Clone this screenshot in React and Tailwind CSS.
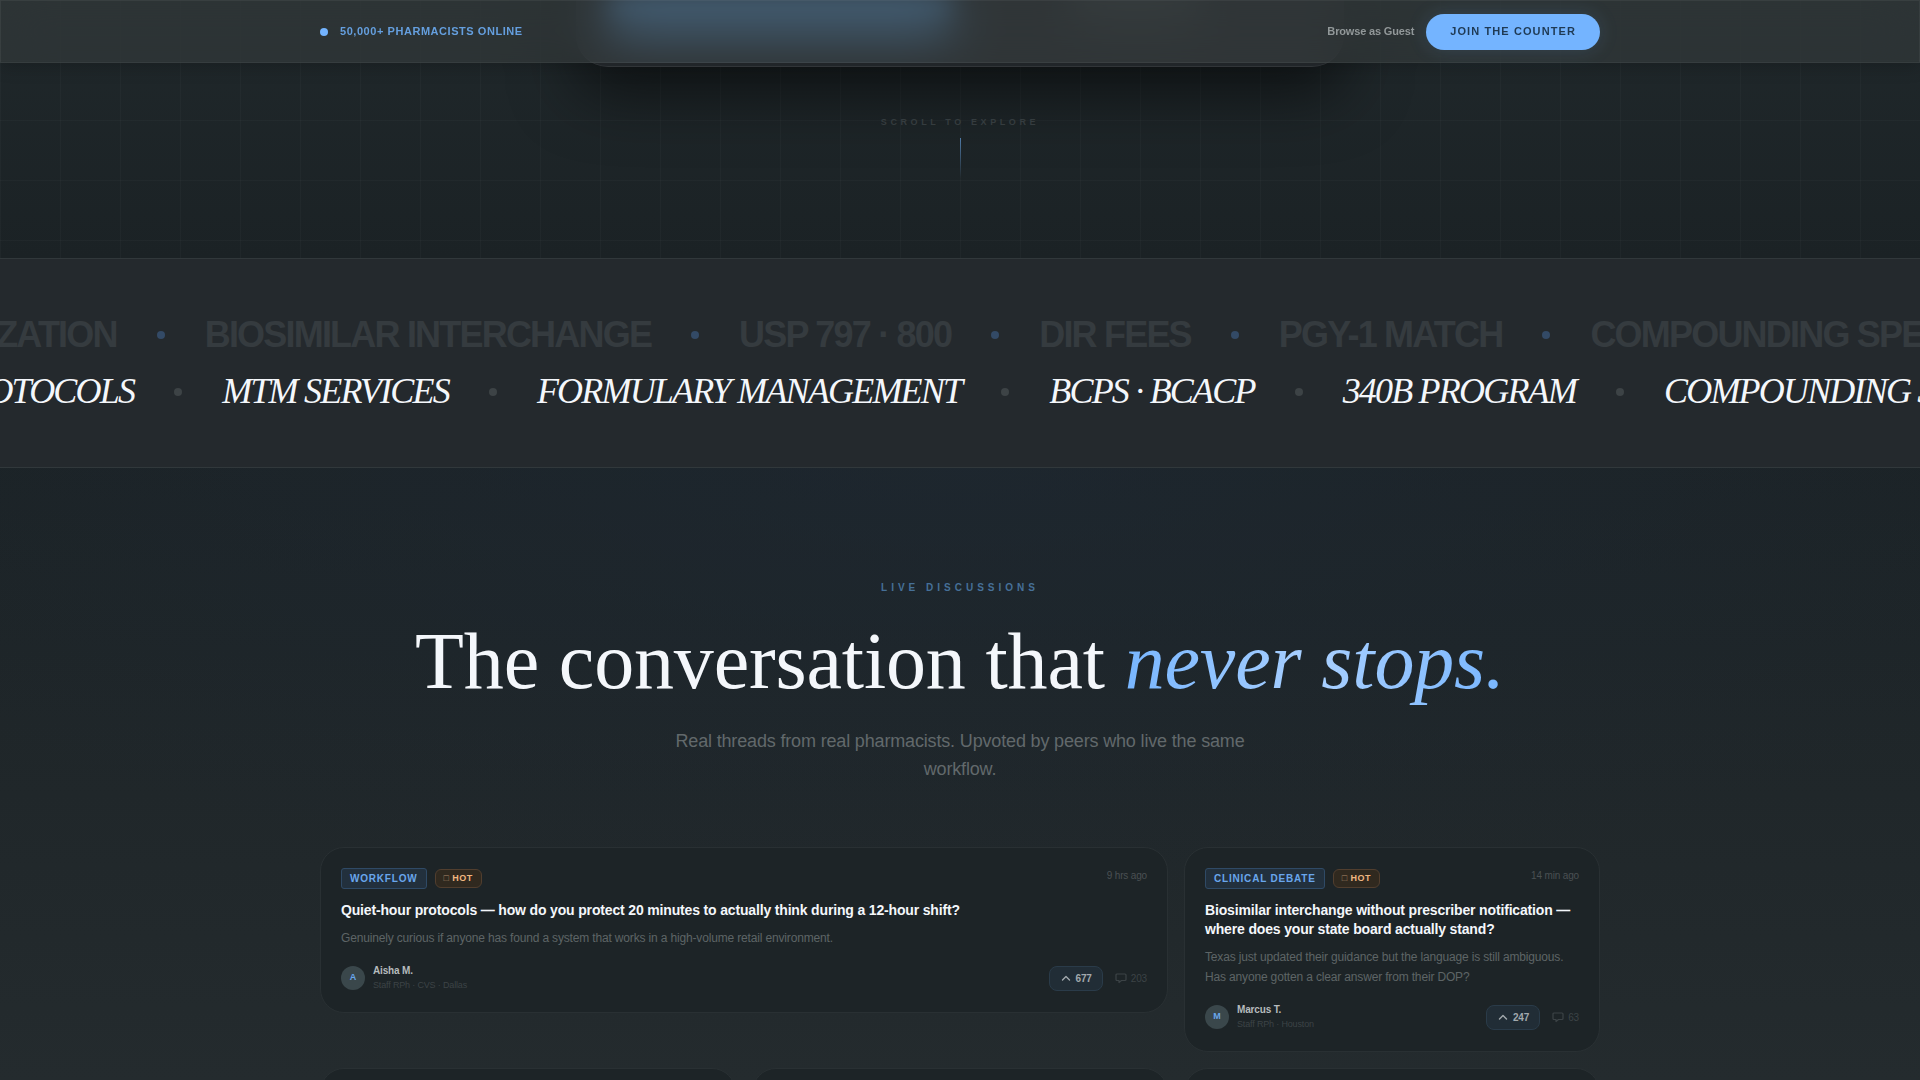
import React from "react";

const topicsTop = [
  "IMMUNIZATION",
  "BIOSIMILAR INTERCHANGE",
  "USP 797 · 800",
  "DIR FEES",
  "PGY-1 MATCH",
  "COMPOUNDING SPECS",
];

const topicsBottom = [
  "PROTOCOLS",
  "MTM SERVICES",
  "FORMULARY MANAGEMENT",
  "BCPS · BCACP",
  "340B PROGRAM",
  "COMPOUNDING SPECS",
];

const threads = [
  {
    id: 1,
    wide: true,
    tag: "WORKFLOW",
    time: "9 hrs ago",
    title: "Quiet-hour protocols — how do you protect 20 minutes to actually think during a 12-hour shift?",
    body: "Genuinely curious if anyone has found a system that works in a high-volume retail environment.",
    author: "Aisha M.",
    role: "Staff RPh · CVS · Dallas",
    votes: 677,
    comments: 203,
  },
  {
    id: 2,
    wide: false,
    tag: "CLINICAL DEBATE",
    time: "14 min ago",
    title: "Biosimilar interchange without prescriber notification — where does your state board actually stand?",
    body: "Texas just updated their guidance but the language is still ambiguous. Has anyone gotten a clear answer from their DOP?",
    author: "Marcus T.",
    role: "Staff RPh · Houston",
    votes: 247,
    comments: 63,
  },
];

const UpIcon = () => (
  <svg className="size-3" viewBox="0 0 12 12" fill="none" stroke="currentColor" strokeWidth="1.4" strokeLinecap="round" strokeLinejoin="round">
    <path d="M2.500 8L6 4.500 9.500 8" />
  </svg>
);

const CommentIcon = () => (
  <svg className="size-3" viewBox="0 0 12 12" fill="none" stroke="currentColor" strokeWidth="1.2" strokeLinejoin="round">
    <path d="M2 2h8a1 1 0 0 1 1 1v4.500a1 1 0 0 1-1 1H6.500L4 10.500v-2H2a1 1 0 0 1-1-1V3a1 1 0 0 1 1-1z" />
  </svg>
);

const Header = () => (
  <header className="fixed inset-x-0 top-0 z-20 h-[63px] border border-white/5 bg-[#3a4040]/50 shadow-[0_4px_16px_rgba(0,0,0,0.2)] backdrop-blur-xl">
    <div className="mx-auto flex h-full max-w-7xl items-center justify-between">
      <div className="flex items-center gap-3">
        <span className="size-2 rounded-full bg-[#74b4ff]" />
        <span className="text-[11px] font-bold tracking-wider text-[#659fdf]">50,000+ PHARMACISTS ONLINE</span>
      </div>
      <div className="flex items-center gap-3">
        <a href="#guest" className="text-[11px] font-bold text-[#929899]">
          Browse as Guest
        </a>
        <button
          type="button"
          className="h-9 rounded-full bg-[#74b4ff] px-6 text-[11px] font-bold tracking-widest text-[#1f3a54] shadow-[0_0_20px_rgba(116,180,255,0.15)]"
        >
          JOIN THE COUNTER
        </button>
      </div>
    </div>
  </header>
);

const Hero = () => (
  <section className="relative h-[258px] shrink-0 bg-linear-to-b from-[#20282b] to-[#1b2225]">
    <div className="absolute inset-0 bg-[linear-gradient(rgba(255,255,255,0.022)_1px,transparent_1px),linear-gradient(90deg,rgba(255,255,255,0.022)_1px,transparent_1px)] bg-[size:60px_60px]" />
    <div className="relative flex flex-col items-center">
      <div className="flex h-[67px] w-full max-w-3xl items-start justify-between rounded-b-[32px] border-b border-white/8 bg-[#262b2f] px-8 shadow-[0_24px_64px_rgba(0,0,0,0.6)]">
        <div className="h-8 w-[344px] rounded-b-xl bg-[#558cc0] blur-md" />
        <div className="mr-28 h-4 w-32 rounded-b-lg bg-[#434b4d] blur-lg" />
      </div>
      <p className="mt-[47px] text-[9px] leading-4 font-bold tracking-[0.4em] text-[#353c3f]">SCROLL TO EXPLORE</p>
      <span className="mt-2 h-10 w-px bg-linear-to-b from-[#4f7ba9] to-transparent" />
    </div>
  </section>
);

const Marquee = () => (
  <section className="flex h-[210px] shrink-0 flex-col justify-center gap-1 overflow-hidden border-y border-[#31383b] bg-[#24292d] whitespace-nowrap">
    <div className="-ml-[125px] flex items-center gap-10 text-4xl leading-[53px] font-bold tracking-tighter text-[#353b3f]">
      {topicsTop.map((topic) => (
        <React.Fragment key={topic}>
          <span>{topic}</span>
          <span className="size-2 shrink-0 rounded-full bg-[#334a66]" />
        </React.Fragment>
      ))}
    </div>
    <div className="-ml-[53px] flex items-center gap-10 font-['Liberation_Serif',serif] text-4xl leading-[53px] tracking-tighter text-[#f4f7fb] italic">
      {topicsBottom.map((topic) => (
        <React.Fragment key={topic}>
          <span>{topic}</span>
          <span className="size-2 shrink-0 rounded-full bg-[#3d4346]" />
        </React.Fragment>
      ))}
    </div>
  </section>
);

const ThreadCard = ({ thread }) => (
  <article
    className={`rounded-3xl border border-[#293033] bg-[#1d2427] p-5 ${thread.wide ? "col-span-8" : "col-span-4"}`}
  >
    <div className="flex items-start justify-between">
      <div className="flex items-center gap-2">
        <span className="rounded-[3px] border border-[#2f4a66] bg-[#22303d] px-2 text-[10px] leading-[19px] font-bold tracking-[0.08em] text-[#69a6ec]">
          {thread.tag}
        </span>
        <span className="rounded-md border border-[#513e2e] bg-[#30291f] px-2 text-[9px] leading-[17px] font-bold tracking-wider text-[#f0b680]">
          <span className="font-normal text-[#a98a6c]">□</span> HOT
        </span>
      </div>
      <time className="text-[10px] leading-4 text-[#4a5053]">{thread.time}</time>
    </div>
    <h3 className="mt-3 text-sm leading-[19px] font-bold text-[#f4f7fb]">{thread.title}</h3>
    <p className="mt-2 text-xs leading-5 text-[#5d6466]">{thread.body}</p>
    <div className="mt-4 flex items-center justify-between">
      <div className="flex items-center gap-2">
        <span className="flex size-6 items-center justify-center rounded-full bg-[#3a474b] text-[9px] font-bold text-[#69a6ec]">
          {thread.author[0]}
        </span>
        <div>
          <p className="text-[10px] leading-[14px] font-bold text-[#b6bbbd]">{thread.author}</p>
          <p className="text-[9px] leading-[14px] text-[#3c4346]">{thread.role}</p>
        </div>
      </div>
      <div className="flex items-center gap-3">
        <button
          type="button"
          className="flex h-[25px] items-center gap-1 rounded-lg border border-[#2a3b49] bg-[#212d36] px-[10px] text-[10px] font-bold text-[#a2a9ad]"
        >
          <UpIcon />
          {thread.votes}
        </button>
        <span className="flex items-center gap-1 text-[10px] text-[#3c4346]">
          <CommentIcon />
          {thread.comments}
        </span>
      </div>
    </div>
  </article>
);

const Discussions = () => (
  <section className="grow bg-[radial-gradient(ellipse_65%_55%_at_50%_0%,rgba(30,40,50,0.7),transparent)] px-8 pt-28">
    <div className="flex flex-col items-center text-center">
      <p className="text-[10px] leading-4 font-bold tracking-[0.4em] text-[#467098]">LIVE DISCUSSIONS</p>
      <h2 className="mt-6 font-['Liberation_Serif',serif] text-[80px] leading-[82px] text-[#f4f7fb]">
        The conversation that{" "}
        <em className="bg-linear-to-r from-[#78b6ff] via-[#a9d0ff] to-[#78b6ff] bg-clip-text text-transparent">
          never stops.
        </em>
      </h2>
      <p className="mt-[25px] max-w-xl text-lg leading-7 text-[#62696b]">
        Real threads from real pharmacists. Upvoted by peers who live the same workflow.
      </p>
    </div>
    <div className="mx-auto mt-16 grid max-w-7xl grid-cols-12 items-start gap-4">
      {threads.map((thread) => (
        <ThreadCard key={thread.id} thread={thread} />
      ))}
      {[3, 4, 5].map((id) => (
        <article key={id} className="col-span-4 h-48 rounded-3xl border border-[#293033] bg-[#1d2427]" />
      ))}
    </div>
  </section>
);

const App = () => (
  <div className="font-['Liberation_Sans',sans-serif] text-base tracking-[-0.01em]">
    <main className="flex h-screen flex-col overflow-hidden bg-linear-to-b from-[#1b2225] from-40% to-[#242b2e]">
      <Hero />
      <Marquee />
      <Discussions />
    </main>
    <Header />
  </div>
);

export default App;
